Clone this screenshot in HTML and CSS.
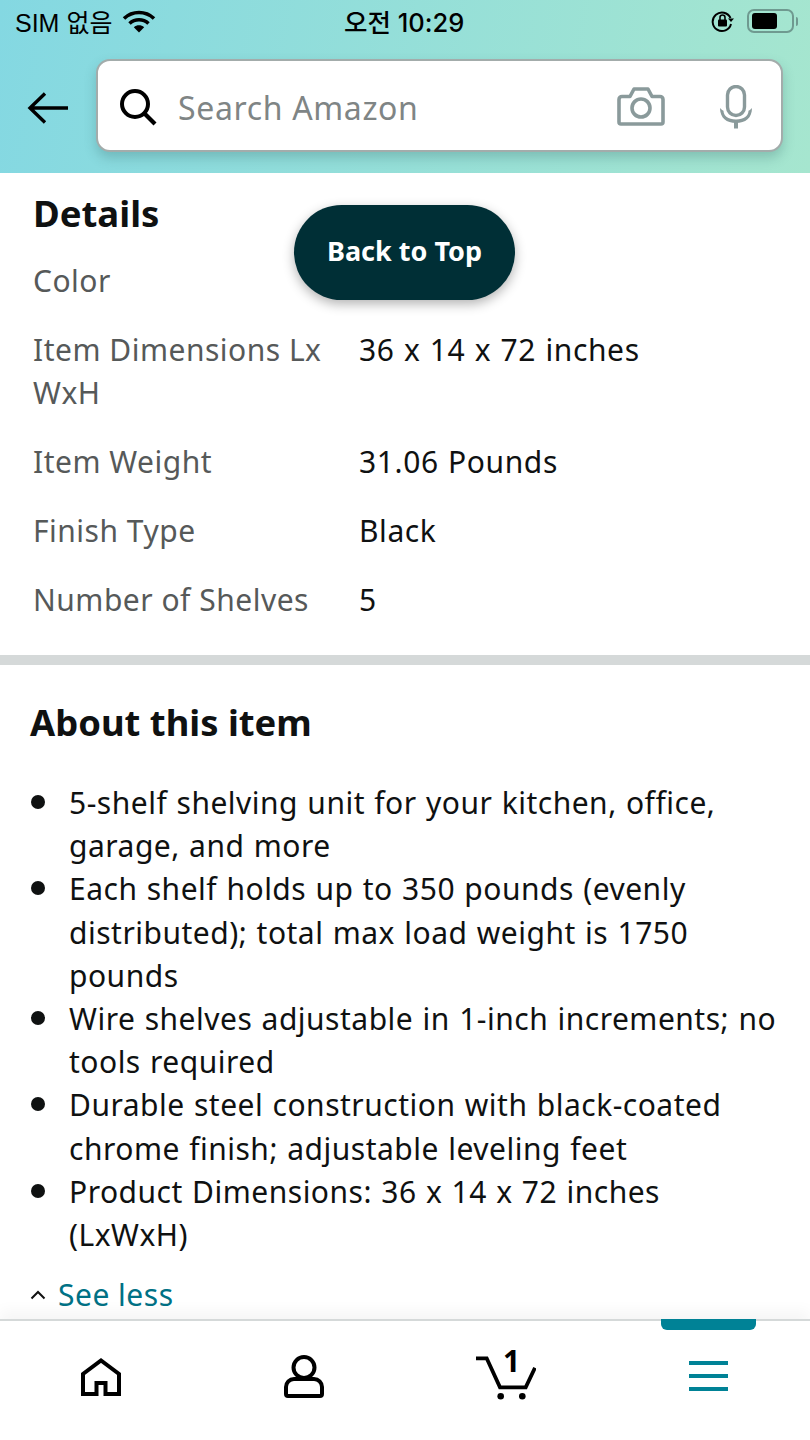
FILE: index.html
```html
<!DOCTYPE html>
<html lang="en">
<head>
<meta charset="utf-8">
<title>Amazon product details</title>
<link rel="stylesheet" href="styles.css">
</head>
<body>
<div class="app">
  <header class="top">
    <div class="status">
      <div class="status-left">
        <span class="carrier">SIM 없음</span>
        <svg class="wifi" width="34" height="24" viewBox="0 0 34 24"><path d="M2 9.5C10.5 1.5 23.5 1.5 32 9.5" fill="none" stroke="#000" stroke-width="3.6"/><path d="M7.5 14.5C13 9.5 21 9.5 26.5 14.500" fill="none" stroke="#000" stroke-width="3.6"/><path d="M11.8 18.2C15 15.6 19 15.6 22.2 18.2L17 23.4Z" fill="#000"/></svg>
      </div>
      <div class="clock">오전 10:29</div>
      <div class="status-right">
        <svg width="24" height="24" viewBox="0 0 24 24"><path d="M19.5 9A9.3 9.3 0 1 0 20 15" fill="none" stroke="#000" stroke-width="2"/><path d="M17 9.5h6l-3 3.5z" fill="#000"/><rect x="7" y="10.5" width="9" height="7" rx="1" fill="#000"/><path d="M9 11V8.5a2.5 2.5 0 0 1 5 0V11" fill="none" stroke="#000" stroke-width="1.6"/></svg>
        <div class="battery"><div class="battery-fill"></div></div>
        <div class="battery-tip"></div>
      </div>
    </div>
    <div class="search-row">
      <svg class="back" width="42" height="34" viewBox="0 0 42 34"><path d="M41 17H3M18 2.500 3 17l15 14.500" fill="none" stroke="#000" stroke-width="3.4"/></svg>
      <div class="search">
        <svg width="40" height="40" viewBox="0 0 40 40"><circle cx="17" cy="17" r="13" fill="none" stroke="#000" stroke-width="4"/><path d="M26 26 37 37" stroke="#000" stroke-width="4.200"/></svg>
        <span class="placeholder">Search Amazon</span>
        <svg class="camera" width="48" height="40" viewBox="0 0 48 40"><path d="M2 12.500a3 3 0 0 1 3-3h8L17 2h14l4 7.500h8a3 3 0 0 1 3 3V35a2 2 0 0 1-2 2H4a2 2 0 0 1-2-2Z" fill="none" stroke="#8a9a9b" stroke-width="3.600" stroke-linejoin="round"/><circle cx="24" cy="21" r="9" fill="none" stroke="#8a9a9b" stroke-width="3.600"/></svg>
        <svg class="mic" width="36" height="44" viewBox="0 0 36 44"><rect x="9.500" y="1.500" width="17" height="29" rx="8.500" fill="none" stroke="#8a9a9b" stroke-width="3.400"/><path d="M2 23c0 10 6.500 15 16 15s16-5 16-15c0 0-1.500 2-3.500 2.800C30.500 31 26 34.500 18 34.500S5.500 31 5.500 25.800C3.500 25 2 23 2 23Z" fill="#8a9a9b"/><rect x="16" y="36" width="4" height="7.500" fill="#8a9a9b"/></svg>
      </div>
    </div>
  </header>

  <main class="content">
    <section class="details">
      <h2 class="details-title">Details</h2>
      <dl class="spec">
        <dt>Color</dt><dd></dd>
        <dt>Item Dimensions Lx WxH</dt><dd>36 x 14 x 72 inches</dd>
        <dt>Item Weight</dt><dd>31.06 Pounds</dd>
        <dt>Finish Type</dt><dd>Black</dd>
        <dt>Number of Shelves</dt><dd>5</dd>
      </dl>
    </section>
    <section class="about">
      <h2 class="about-title">About this item</h2>
      <ul class="bullets">
        <li>5-shelf shelving unit for your kitchen, office, garage, and more</li>
        <li>Each shelf holds up to 350 pounds (evenly distributed); total max load weight is 1750 pounds</li>
        <li>Wire shelves adjustable in 1-inch increments; no tools required</li>
        <li>Durable steel construction with black-coated chrome finish; adjustable leveling feet</li>
        <li>Product Dimensions: 36 x 14 x 72 inches (LxWxH)</li>
      </ul>
      <div class="see-less">
        <svg width="16" height="10" viewBox="0 0 16 10"><path d="M1.500 8.500 8 2l6.500 6.500" fill="none" stroke="#111" stroke-width="2"/></svg>
        <span>See less</span>
      </div>
    </section>
  </main>

  <nav class="tabs">
    <div class="tab">
      <svg width="40" height="38" viewBox="0 0 40 38"><path d="M2 36V16L20 2.500 38 16V36H24.500V25H15.500V36Z" fill="none" stroke="#000" stroke-width="4"/></svg>
    </div>
    <div class="tab person">
      <svg width="40" height="44" viewBox="0 0 40 44"><circle cx="20" cy="12.500" r="10.500" fill="none" stroke="#000" stroke-width="4"/><path d="M10 24H30a8 8 0 0 1 8 8V39a2 2 0 0 1-2 2H4a2 2 0 0 1-2-2V32a8 8 0 0 1 8-8Z" fill="none" stroke="#000" stroke-width="4"/></svg>
    </div>
    <div class="tab cart">
      <svg width="60" height="48" viewBox="0 0 60 48"><path d="M0 6.300H10.700L24 35.300H49.700L59 15.700" fill="none" stroke="#000" stroke-width="3.800"/><circle cx="24.700" cy="44.300" r="3.300" fill="#000"/><circle cx="46.300" cy="44.300" r="3.300" fill="#000"/></svg>
      <span class="cart-count">1</span>
    </div>
    <div class="tab menu">
      <div class="menu-mark"></div>
      <div class="burger"><i></i><i></i><i></i></div>
    </div>
  </nav>

  <button class="back-top">Back to Top</button>
</div>
</body>
</html>
```

FILE: styles.css
```css
* { box-sizing: border-box; }
html, body { margin: 0; padding: 0; background: #fff; }
body { font-family: "Noto Sans", "Noto Sans CJK KR", sans-serif; color: #0f1111; }

.app {
  position: relative;
  width: 810px;
  height: 1440px;
  display: flex;
  flex-direction: column;
  overflow: hidden;
}

.top {
  height: 173px;
  flex: none;
  background: linear-gradient(100deg, #84d8e2 0%, #a6e6cf 100%);
}
.status {
  height: 42px;
  padding: 0 12px 0 15px;
  display: flex;
  align-items: center;
  justify-content: space-between;
  position: relative;
  color: #000;
}
.status-left { display: flex; align-items: center; gap: 10px; }
.carrier { font-family: "Liberation Sans", "Noto Sans CJK KR", sans-serif; font-size: 25px; }
.clock {
  font-family: Inter, "Noto Sans CJK KR", sans-serif;
  font-size: 25.500px;
  font-weight: 500;
  position: absolute;
  left: 344px;
  top: 2px;
}
.status-right { display: flex; align-items: center; }
.status-right svg { margin-right: 12px; }
.battery {
  width: 47px;
  height: 24px;
  border: 2px solid #6f9a90;
  border-radius: 7px;
  padding: 2px 3px;
}
.battery-fill { width: 25px; height: 100%; background: #000; border-radius: 3px; }
.battery-tip { width: 2px; height: 9px; margin-left: 2px; background: #6f9a90; border-radius: 0 2px 2px 0; }

.search-row {
  display: flex;
  align-items: center;
  padding: 17px 27px 0 27px;
  gap: 27px;
}
.back { margin-top: 4px; }
.search {
  flex: 1;
  height: 93px;
  background: #fff;
  border: 2px solid #a3acab;
  border-radius: 14px;
  box-shadow: 0 6px 12px rgba(50, 100, 100, .28);
  display: flex;
  align-items: center;
  padding: 3px 27px 0 20px;
}
.placeholder { font-size: 32px; color: #7f8585; margin-left: 20px; flex: 1; letter-spacing: .65px; }
.mic { margin-left: 53px; }

.content { flex: 1; min-height: 0; overflow: hidden; }

.details { padding: 19px 33px 0; height: 492px; border-bottom: 10px solid #d5d9d9; }
.details-title { margin: 0; font-size: 36.500px; line-height: 42px; font-weight: 700; color: #0f1111; }
.spec {
  margin: 25px 0 0;
  display: grid;
  grid-template-columns: 326px 1fr;
  row-gap: 26px;
  font-size: 30px;
  line-height: 43px;
}
.spec dt { color: #565959; letter-spacing: .5px; }
.spec dd { margin: 0; color: #0f1111; letter-spacing: .6px; word-spacing: 1px; }

.about { padding: 36px 30px 0; }
.about-title { margin: 0; font-size: 36.400px; line-height: 42px; font-weight: 700; }
.bullets {
  margin: 38px 0 0;
  padding: 0;
  list-style: none;
  font-size: 30px;
  line-height: 43.2px;
  letter-spacing: .5px;
  word-spacing: 1px;
}
.bullets li { padding-left: 39px; position: relative; }
.bullets li::before {
  content: "";
  position: absolute;
  left: 1px;
  top: 14px;
  width: 14px;
  height: 14px;
  border-radius: 50%;
  background: #0f1111;
}
.see-less {
  margin-top: 17px;
  display: flex;
  align-items: center;
  gap: 12px;
  font-size: 30px;
  line-height: 44px;
  letter-spacing: .5px;
  color: #007185;
}

.tabs {
  height: 121px;
  flex: none;
  border-top: 2px solid #d5d9d9;
  box-shadow: 0 -8px 14px rgba(0, 0, 0, .04);
  display: grid;
  grid-template-columns: repeat(4, 1fr);
  background: #fff;
  position: relative;
}
.tab { display: flex; justify-content: center; align-items: flex-start; padding-top: 37px; position: relative; }
.person { padding-top: 34px; }
.cart { padding-top: 31px; }
.cart-count {
  position: absolute;
  left: 98px;
  top: 20px;
  font-size: 30px;
  font-weight: 700;
  line-height: 40px;
  color: #000;
}
.menu-mark {
  position: absolute;
  top: -2px;
  left: 53px;
  width: 95px;
  height: 11px;
  background: #008296;
  border-radius: 0 0 6px 6px;
}
.burger { display: flex; flex-direction: column; gap: 9px; width: 39px; padding-top: 3px; }
.burger i { display: block; height: 4px; background: #008296; }

.back-top {
  position: absolute;
  left: 294px;
  top: 205px;
  width: 221px;
  height: 95px;
  border: 0;
  border-radius: 48px;
  padding: 0 0 4px;
  background: #002f36;
  color: #fff;
  font-family: "Noto Sans", sans-serif;
  font-size: 27px;
  font-weight: 700;
  box-shadow: 0 4px 12px rgba(0, 0, 0, .3);
}
```
